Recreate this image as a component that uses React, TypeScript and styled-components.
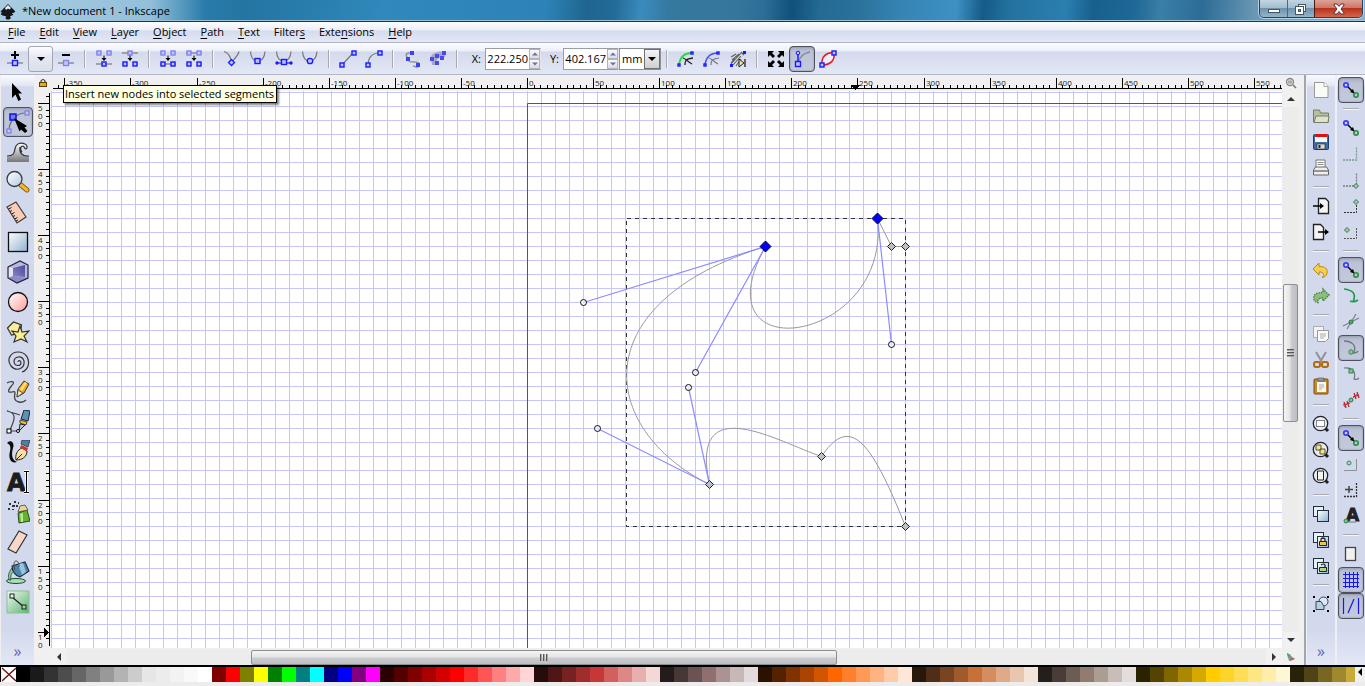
import React, { useLayoutEffect, useRef, useState } from 'react';
import styled, { createGlobalStyle, css } from 'styled-components';

const GlobalStyle = createGlobalStyle`
  *, *::before, *::after { box-sizing: border-box; }
  body { margin: 0; background: #f0f0f0; }
  body, button, input, select {
    font-family: "Open Sans", "Noto Sans", sans-serif;
    font-size: 11px;
    color: #000;
  }
  button { padding: 0; border: 0; background: none; }
  svg { display: block; flex: none; }
`;

/* ---------- window frame ---------- */

const Window = styled.div`
  min-height: 100vh;
  display: flex;
  flex-direction: column;
  overflow: hidden;
`;

const TitleBar = styled.header`
  height: 22px;
  display: flex;
  align-items: center;
  justify-content: space-between;
  border-bottom: 1px solid #17364c;
  box-shadow: inset 0 -1px 0 #9cc3dc;
  background:
    linear-gradient(90deg, rgba(205, 226, 238, 0.75) 0, rgba(190, 218, 235, 0.7) 11%, rgba(160, 200, 225, 0) 15%),
    linear-gradient(95deg, #3a8fbd 0%, #2b7dac 14%, #2475a2 18%, #2a80b0 24%, #3088bb 28%, #2d83b5 40%,
      #1f6590 43%, #226b98 45%, #3a8bbe 47%, #35799f 49%, #35769c 54%, #2b6d95 56%, #10507a 58%,
      #246a93 60%, #2b739c 63%, #3584b4 66%, #3e90c4 70%, #155b87 72%, #2472a0 74%, #2a7fb0 78%,
      #17608e 80%, #1d6896 83%, #3a7fa5 85%, #2c6c96 88%, #6c98b5 92%, #85b4d2 100%);
`;

const Title = styled.h1`
  display: flex;
  align-items: center;
  gap: 6px;
  margin: 0;
  font-size: 11px;
  font-weight: 400;
  line-height: 20px;
`;

const WindowButtons = styled.div`
  display: flex;
  align-self: flex-start;
  height: 18px;
  margin-right: 2px;
  border: 1px solid #2a4257;
  border-top: 0;
  border-radius: 0 0 5px 5px;
  overflow: hidden;
  box-shadow: 0 0 0 1px rgba(230, 243, 250, 0.6);
`;

const WindowButton = styled.button<{ $close?: boolean }>`
  width: ${p => (p.$close ? 48 : 27)}px;
  display: grid;
  place-items: center;
  border-left: 1px solid ${p => (p.$close ? '#4b1a14' : '#4a6a82')};
  background: ${p =>
    p.$close
      ? 'linear-gradient(#dba497 0%, #cf7767 45%, #b9321b 50%, #d2674a 100%)'
      : 'linear-gradient(#c2d5e2 0%, #a3bdd0 45%, #6f93ae 50%, #93b5cb 100%)'};
  &:first-child { border-left: 0; }
`;

const barFace = css`
  background: linear-gradient(#fcfdff 0, #eceff8 8px, #d3d9ec 9px, #d6dcee 40%, #e3e8f6 100%);
  border-bottom: 1px solid #b3b6c9;
`;

const MenuBar = styled.nav`
  ${barFace}
  height: 21px;
  display: flex;
  align-items: center;
  padding-left: 1px;
`;

const MenuLink = styled.a`
  padding: 0 7px;
  color: #000;
  line-height: 20px;
  text-decoration: none;
  u { text-underline-offset: 2px; }
`;

const ControlsBar = styled.div`
  ${barFace}
  height: 32px;
  display: flex;
  align-items: center;
  padding-left: 2px;
`;

const Divider = styled.span<{ $horizontal?: boolean }>`
  flex: none;
  display: grid;
  place-items: center;
  width: ${p => (p.$horizontal ? 16 : 12)}px;
  height: ${p => (p.$horizontal ? 12 : 18)}px;
  &::before {
    content: "";
    width: ${p => (p.$horizontal ? '16px' : '2px')};
    height: ${p => (p.$horizontal ? '2px' : '18px')};
    background: #a9a9ae;
    border: solid #f7f7fa;
    border-width: ${p => (p.$horizontal ? '0 0 1px 0' : '0 1px 0 0')};
  }
`;

const toggled = css`
  border: 1px solid #4f525e;
  border-radius: 4px;
  background: linear-gradient(#a9afc2, #bcc3d6 5px, #c3cadd);
  box-shadow: inset 0 0 2px #7c8192;
`;

const ToolButton = styled.button<{ $on?: boolean }>`
  flex: none;
  width: 26px;
  height: 26px;
  display: grid;
  place-items: center;
  ${p => p.$on && toggled}
`;

const DropButton = styled(ToolButton)`
  width: 25px;
  border: 1px solid #a3a6b2;
  border-radius: 3px;
  background: linear-gradient(#fdfdff, #e6e9f2 40%, #dadfec);
`;

const FieldLabel = styled.label`
  width: 22px;
  padding-right: 4px;
  text-align: right;
`;

const NumberBox = styled.div`
  width: 56px;
  height: 22px;
  display: flex;
  background: #fff;
  border: 1px solid #9a9ca6;
  border-right-color: #e6e6ec;
  input {
    min-width: 0;
    flex: 1;
    padding: 0 1px 0 0;
    border: 0;
    background: none;
    text-align: right;
    outline: none;
  }
`;

const Spinner = styled.span`
  width: 11px;
  display: grid;
  grid-template-rows: 1fr 1fr;
  button {
    display: grid;
    place-items: center;
    border: 1px solid #b3b3b8;
    background: linear-gradient(#fafafa, #dcdce0);
  }
`;

const UnitBox = styled.div`
  position: relative;
  width: 42px;
  height: 22px;
  select {
    width: 100%;
    height: 100%;
    padding: 0 0 0 2px;
    border: 1px solid #8d8f99;
    border-radius: 0;
    background: #fff;
    appearance: none;
    outline: none;
  }
`;

const UnitArrow = styled.span`
  position: absolute;
  top: 1px;
  right: 1px;
  bottom: 1px;
  width: 16px;
  display: grid;
  place-items: center;
  border: 1px solid #707070;
  background: linear-gradient(#f4f4f4, #cfcfcf);
  pointer-events: none;
`;

/* ---------- work area ---------- */

const Main = styled.main`
  flex: 1;
  display: flex;
  position: relative;
`;

const sideFace = css`
  background: linear-gradient(#fafbff 0, #e4e8f5 10px, #d3d9ed 12px, #d3d9ed 94%, #e3e8f6 100%);
`;

const Toolbox = styled.aside`
  ${sideFace}
  width: 33px;
  margin-left: 1px;
  padding-top: 2px;
  display: flex;
  flex-direction: column;
  align-items: center;
`;

const ToolboxButton = styled.button<{ $on?: boolean }>`
  width: 30px;
  height: 30px;
  display: grid;
  place-items: center;
  ${p => p.$on && toggled}
`;

const Overflow = styled.button`
  margin-top: auto;
  height: 28px;
  font-size: 16px;
  line-height: 20px;
  color: #6464ac;
`;

const Sheet = styled.section`
  flex: 1;
  min-width: 0;
  display: grid;
  grid-template-columns: 17px minmax(0, 1fr) 17px;
  grid-template-rows: 16px minmax(0, 1fr) 17px;
  padding-right: 5px;
  background: #f0f0f0;
`;

const Corner = styled.button`
  display: grid;
  place-items: center;
`;

const Ruler = styled.svg`
  width: 100%;
  height: 100%;
  min-height: 0;
  overflow: hidden;
  text { font-family: "Open Sans", sans-serif; font-size: 8px; fill: #222; }
`;

const CanvasCell = styled.div`
  position: relative;
  min-height: 0;
  background: #fff;
  overflow: hidden;
`;

const Drawing = styled.svg`
  position: absolute;
  inset: 0;
  width: 100%;
  height: 100%;
`;

const ScrollTrack = styled.div<{ $vertical?: boolean }>`
  display: flex;
  flex-direction: ${p => (p.$vertical ? 'column' : 'row')};
  align-items: center;
  background: #ececec;
  ${p => (p.$vertical ? 'width: 17px;' : 'height: 16px; margin-top: 1px;')}
`;

const ScrollArrow = styled.button`
  flex: none;
  width: 16px;
  height: 16px;
  display: grid;
  place-items: center;
  background: #f1f1f1;
`;

const Space = styled.span<{ $grow: number }>`
  flex: ${p => p.$grow} 1 0;
`;

const Thumb = styled.span<{ $vertical?: boolean; $grow: number }>`
  flex: ${p => p.$grow} 1 0;
  display: flex;
  flex-direction: ${p => (p.$vertical ? 'column' : 'row')};
  align-items: center;
  justify-content: center;
  gap: 1px;
  border: 1px solid #8f8f8f;
  border-radius: 2px;
  ${p => (p.$vertical ? 'width: 15px;' : 'height: 15px;')}
  background: linear-gradient(${p => (p.$vertical ? '90deg' : '180deg')}, #f4f4f4, #e4e4e6 48%, #cccdd0 52%, #bdbec1);
  i {
    ${p => (p.$vertical ? 'width: 7px; height: 2px;' : 'width: 2px; height: 7px;')}
    background: #555;
    border: solid #aaa;
    border-width: ${p => (p.$vertical ? '0 0 1px 0' : '0 1px 0 0')};
  }
`;

const RightDock = styled.aside`
  display: flex;
  gap: 2px;
  padding-left: 1px;
  border-left: 2px solid #a3a5ac;
  background: #eef0f8;
`;

const IconColumn = styled.div`
  ${sideFace}
  width: 28px;
  padding-top: 2px;
  display: flex;
  flex-direction: column;
  align-items: center;
`;

const Tooltip = styled.div`
  position: absolute;
  top: 10px;
  left: 63px;
  height: 18px;
  padding: 0 2px 0 1px;
  border: 1px solid #000;
  background: #ffffe1;
  box-shadow: 2px 2px 2px rgba(0, 0, 0, 0.5);
  line-height: 16px;
  white-space: nowrap;
`;

/* ---------- palette ---------- */

const Palette = styled.footer`
  height: 21px;
  display: flex;
  padding-left: 2px;
  border-top: 2px solid #000;
  border-bottom: 4px solid #ececec;
  box-shadow: inset 1px 0 0 #000;
`;

const Swatches = styled.div`
  flex: 1;
  min-width: 0;
  display: flex;
  overflow: hidden;
`;

const Swatch = styled.button<{ $color: string }>`
  flex: none;
  width: 14px;
  height: 15px;
  background: ${p => p.$color};
`;

const PaletteMenu = styled.button`
  width: 10px;
  height: 10px;
  display: grid;
  place-items: center;
`;

/* ---------- icon parts ---------- */

const BLUE = '#1a1aff';
const PALE = '#8383ee';

const Glyph = ({ s = 24, children }: { s?: number; children: React.ReactNode }) => (
  <svg width={s} height={s} viewBox="0 0 24 24" fill="none" aria-hidden="true">
    {children}
  </svg>
);

const Sq = ({ x, y, pale, r = 2 }: { x: number; y: number; pale?: boolean; r?: number }) => (
  <rect x={x - r} y={y - r} width={r * 2} height={r * 2} fill={pale ? '#c4c8f4' : '#b8c4ff'}
    stroke={pale ? PALE : BLUE} strokeWidth="1.4" />
);

const Wire = ({ d, c = '#77787c', w = 1.2 }: { d: string; c?: string; w?: number }) => (
  <path d={d} stroke={c} strokeWidth={w} />
);

const Down = () => (
  <path d="M11.5 8.500h1v2.500h2l-2.500 3-2.500-3h2z" fill="#000" />
);

const Triangle = ({ dir, c = '#000', s = 8 }: { dir: 'up' | 'down' | 'left' | 'right'; c?: string; s?: number }) => {
  const d = { up: 'M0 6h8L4 2z', down: 'M0 2h8L4 6z', left: 'M6 0v8L2 4z', right: 'M2 0v8l4-4z' }[dir];
  return (
    <svg width={s} height={s} viewBox="0 0 8 8" aria-hidden="true"><path d={d} fill={c} /></svg>
  );
};

/* ---------- node toolbar ---------- */

const U = 'M4.500 4.500C5 11 7.500 14 11.500 14S18.500 11 19 4.500';

const nodeIcons: Record<string, React.ReactNode> = {
  insert: <><path d="M11 4h2v3h3v2h-3v3h-2V9H8V7h3z" fill="#000" /><Wire d="M4 16h16" /><Sq x={12} y={16} r={2.500} /></>,
  remove: <><path d="M8 7h8v2H8z" fill="#000" /><Wire d="M4 16h16" /><Sq x={12} y={16} pale r={2.500} /></>,
  join: <><Wire d="M4 6h3M17 6h3" /><Sq x={7} y={6} pale /><Sq x={17} y={6} pale /><Down /><Wire d="M4 17h16" /><Sq x={12} y={17} /></>,
  split: <><Wire d="M4 6h16" /><Sq x={12} y={6} pale /><Down /><Wire d="M4 17h3M17 17h3" /><Sq x={7} y={17} /><Sq x={17} y={17} /></>,
  joinSeg: <><Wire d="M4 6h3M17 6h3" /><Sq x={7} y={6} pale /><Sq x={17} y={6} pale /><Down /><Wire d="M4 17h16" /><Sq x={7} y={17} /><Sq x={17} y={17} /></>,
  delSeg: <><Wire d="M4 6h16" /><Sq x={7} y={6} pale /><Sq x={17} y={6} pale /><Down /><Wire d="M4 17h3M17 17h3" /><Sq x={7} y={17} /><Sq x={17} y={17} /></>,
  cusp: <><Wire d="M4 4.500c4 1 6.500 4 7.500 11C13 13 18 9 19 4.500" /><path d="M11.500 12.500l3 3-3 3-3-3z" fill="#b8c4ff" stroke={BLUE} strokeWidth="1.300" /></>,
  smooth: <><Wire d={U} /><Sq x={11.500} y={14} r={2.500} /></>,
  symmetric: <><Wire d={U} /><Wire d="M5 16h14" c={BLUE} /><Sq x={12} y={15} r={2.500} /><circle cx="5" cy="16" r="1.700" fill={BLUE} /><circle cx="19" cy="16" r="1.700" fill={BLUE} /></>,
  auto: <><Wire d={U} /><circle cx="12" cy="14" r="2.700" fill="#b8c4ff" stroke={BLUE} strokeWidth="1.300" /></>,
  line: <><Wire d="M6 18L17 6" /><Sq x={6} y={18} /><Sq x={18} y={6} /></>,
  curve: <><Wire d="M6 18C6 11 10 6 17 6" /><Sq x={6} y={18} /><Sq x={18} y={6} /></>,
  objPath: <><path d="M12 6H9C5 6 6 9 8 12c1 3 2 3 6 3 4 0 5 0 5 3s-3 2-6 1" stroke="#8d90a0" strokeWidth="1.600" />
    <path d="M10 4h4v4h-4zM6 10h4v4H6zM16 16h4v4h-4z" fill="#4040f4" /></>,
  strokePath: <><path d="M5 9c4-5 10-5 14-4v5c-6-1-8 2-10 8H6z" fill="#a5a8c8" />
    <path d="M4 10h4v4H4zM9 7h4v4H9zM9 14h4v4H9zM16 4h4v4h-4zM14 9h4v4h-4z" fill="#4a4aee" /></>,
  clip: <><Wire d="M5 18C6 10 10 6 18 6" c="#22dd33" w={1.800} /><path d="M11 18c0-4 0-6 8-7M9 11c3 1 4 3 9 6" stroke="#222" strokeWidth="1.300" /><Sq x={5} y={18} r={1} /><Sq x={18} y={6} r={1} /></>,
  mask: <><Wire d="M5 18C6 10 10 6 18 6" c="#4b4bff" w={1.600} /><path d="M11 18c0-4 0-6 8-7M9 11c3 1 4 3 9 6" stroke="#777a88" strokeWidth="1.200" /><Sq x={5} y={18} r={1} /><Sq x={18} y={6} r={1} /></>,
  lpe: <><path d="M5 17l10-11M7 18l8-9M5 10l5-3M6 13l7-6M5 16l4-4M10 19l5-7M15 5l3 3" stroke="#5a5e55" strokeWidth="1.100" /><path d="M13 12l5 4-5 4z" fill="#f5df9a" stroke="#222" /><path d="M19 12v8" stroke="#222" strokeWidth="1.300" /><path d="M4 17h3v3H4zM17 4h3v3h-3z" fill={BLUE} /></>,
  transform: <path d="M4 4h6l-2 2 3 3-2 2-3-3-2 2zM20 4v6l-2-2-3 3-2-2 3-3-2-2zM4 20v-6l2 2 3-3 2 2-3 3 2 2zM20 20h-6l2-2-3-3 2-2 3 3 2-2z" fill="#000" />,
  handles: <><Wire d="M8 17C9 10 14 6 20 5" c="#888c98" w={1.500} /><Wire d="M8 6v10" c={BLUE} w={1.500} /><circle cx="8" cy="6" r="1.800" fill="#b8c4ff" stroke={BLUE} /><Sq x={8} y={17} r={2.500} /></>,
  outline: <><path d="M6 18C5 10 10 5 18 6C19 13 15 18 6 18" fill="#eef" stroke="#f01818" strokeWidth="1.500" /><Sq x={6} y={18} /><Sq x={18} y={6} /></>,
};

const NodeTool = ({ id, label, on }: { id: string; label: string; on?: boolean }) => (
  <ToolButton aria-label={label} aria-pressed={on} $on={on}><Glyph>{nodeIcons[id]}</Glyph></ToolButton>
);

const Coordinate = ({ name, value }: { name: string; value: string }) => (
  <>
    <FieldLabel htmlFor={`coord-${name}`}>{name}:</FieldLabel>
    <NumberBox>
      <input id={`coord-${name}`} defaultValue={value} />
      <Spinner>
        <button aria-label={`Increase ${name}`}><Triangle dir="up" c="#5a72b8" s={6} /></button>
        <button aria-label={`Decrease ${name}`}><Triangle dir="down" c="#5a72b8" s={6} /></button>
      </Spinner>
    </NumberBox>
  </>
);

/* ---------- toolbox ---------- */

const tools: { label: string; icon: React.ReactNode; on?: boolean }[] = [
  { label: 'Select', icon: <path d="M6 3v15l3.500-3.500 2.800 6.500 2.800-1.400-2.800-6.100H16z" fill="#000" /> },
  { label: 'Edit paths by nodes', on: true, icon: <>
    <Wire d="M3 21C3 11 10 3 20 3" c="#6b6e7c" />
    <Sq x={21} y={3} pale /><Sq x={3} y={21} pale />
    <rect x="4" y="4" width="6" height="6" fill="#6c7cff" stroke="#1010e8" strokeWidth="1.500" />
    <path d="M8 8l13 8-2.500 1.500L21.500 21l-2.500 2-4-3.500-1.500 2z" fill="#000" /></> },
  { label: 'Tweak', icon: <>
    <path d="M1 22V17c7 0 7-3 8-8 1-5 5-7 9-5 3 2 3 4 2 5-1 1-2 0-2-1-2-2-5 0-4 3 1 4 3 6 9 6v5z" fill="url(#waveFill)" />
    <path d="M1 16c7 0 7-3 8-7 1-6 6-7 10-5 2 1 3 4 1 5-2 0-1-2-3-3-3 0-3 4-1 6M14 7c-1 5 2 10 9 9" stroke="#333" strokeWidth="1.200" /></> },
  { label: 'Zoom', icon: <>
    <path d="M15 15l6 5" stroke="#8a6412" strokeWidth="5" strokeLinecap="round" /><path d="M15 15l6 5" stroke="#f5b731" strokeWidth="3" strokeLinecap="round" />
    <circle cx="8.500" cy="9" r="7.500" fill="url(#lens)" stroke="#3a3d40" strokeWidth="1.300" /></> },
  { label: 'Measure', icon: <>
    <path d="M1 7l9-5 10 15-9 6z" fill="#f7cdb9" stroke="#4a3a34" strokeWidth="1.200" />
    <path d="M2.500 9l3-1.500M4 11.500l2-1M5.500 14l3-1.500M7 16.500l2-1M8.500 19l3-1.500M10 21l2-1" stroke="#222" /></> },
  { label: 'Rectangle', icon: <rect x="2.500" y="2.500" width="19" height="19" fill="url(#rectFill)" stroke="#111" strokeWidth="1.300" /> },
  { label: '3D box', icon: <>
    <path d="M2 7l12-6 8 4v13l-11 5-9-5z" fill="#b9b9e6" />
    <path d="M2 7l5 1v8l-5 2z" fill="#e4e4f6" /><path d="M2 18l5-2 15 2-11 5z" fill="#8a8ac8" /><path d="M7 8l12-3v12l-12-1z" fill="url(#boxFill)" />
    <path d="M2 7l12-6 8 4v13l-11 5-9-5z" stroke="#24242e" strokeWidth="1.200" /></> },
  { label: 'Ellipse', icon: <circle cx="12" cy="12" r="9.500" fill="url(#pinkFill)" stroke="#111" strokeWidth="1.300" /> },
  { label: 'Star', icon: <>
    <path d="M1.500 8l6-6 8 3-1 8-9 2z" fill="#f9eda0" stroke="#333" strokeWidth="1.200" />
    <path d="M14 6l2 6 7-1-5 5 3 6-6-3-7 3 2-6-4-5 6 1z" fill="#fbee90" stroke="#333" strokeWidth="1.200" /></> },
  { label: 'Spiral', icon: <path d="M12 12c0-2 3-2 3 1 0 3-6 4-7-1 0-6 8-7 10-1 1 8-8 11-13 5-5-7 0-14 7-14 8 0 12 7 10 14-1 3-3 5-6 6" stroke="#333" strokeWidth="1.200" /> },
  { label: 'Pencil', icon: <>
    <path d="M1 3c3-2 8-2 6 1-2 3-6 6-4 8 3 1 6-2 6 1-1 4-1 8 4 9 4 1 6-1 7-2" stroke="#444" strokeWidth="1.300" />
    <path d="M11 17l1-8 6-8 5 3-5 9z" fill="#f7a81c" stroke="#333" /><path d="M14 9l5-7 2 1-5 8z" fill="#ffe27a" /><path d="M11 17l1-7 5 3z" fill="#f6e4c0" stroke="#333" strokeWidth="0.700" /></> },
  { label: 'Bezier', icon: <>
    <path d="M1 1c11 2 7 10 3 19M1 1l13 4M4 21h9" stroke="#444" strokeWidth="1.200" />
    <path d="M15 9l3-9 6 1-2 10z" fill="#5a92b5" stroke="#223" /><path d="M14 10l7 2-1 3-6-2z" fill="#f2c230" stroke="#222" strokeWidth="0.800" /><path d="M14 14l5 1-6 6z" fill="#bcd" stroke="#222" />
    <rect x="1" y="19" width="4" height="4" fill="#fff" stroke="#000" /><circle cx="12" cy="21" r="1.500" fill="#fff" stroke="#000" /></> },
  { label: 'Calligraphy', icon: <>
    <path d="M1 3c4-4 8 0 6 5-2 7-1 12 4 14-6 2-9-3-7-11 1-5 0-6-3-8z" fill="#0c0c0c" />
    <path d="M10 20c-1-5 1-10 6-12l5 3c0 6-5 9-11 9z" fill="#f7e3a4" stroke="#222" /><path d="M10 20l6-6" stroke="#222" /><path d="M15 5l7 3-1 3-7-3z" fill="#c33" /><path d="M16 0h8l-2 7-7-3z" fill="#4f7f9b" stroke="#223" strokeWidth="0.700" /></> },
  { label: 'Text', icon: <>
    <text x="1" y="21" fontFamily="DejaVu Sans" fontWeight="700" fontSize="24" fill="#1c1c1c" stroke="#1c1c1c" strokeWidth="0.800">A</text>
    <path d="M20.500 2v20M18 1.500h5M18 22.500h5" stroke="#fff" strokeWidth="3" /><path d="M20.500 2v20M18 1.500h5M18 22.500h5" stroke="#000" strokeWidth="1.100" /></> },
  { label: 'Spray', icon: <>
    <path d="M12 13l9-3 3 11-11 2z" fill="#63b330" stroke="#2a4a18" /><path d="M14 14l3-1v9h-2z" fill="#b9e98d" /><path d="M12 12l2-6 5-1 3 5z" fill="#e9d58d" stroke="#444" strokeWidth="0.800" />
    <path d="M3 3h2v2H3zM8 1h2v2H8zM6 5h3v2H6zM2 8h2v2H2zM10 5h2v2h-2zM6 9h2v1H6zM12 2h1v2h-1z" fill="#333" /></> },
  { label: 'Eraser', icon: <path d="M2 19L13 1l8 4-11 18z" fill="#f8d8ca" stroke="#333" strokeWidth="1.200" /> },
  { label: 'Paint bucket', icon: <>
    <ellipse cx="10" cy="21" rx="9.500" ry="2.500" fill="#a9dcb9" stroke="#1a4a2c" /><path d="M5 20c-1-5 1-7 3-9l-2-3c-4 5-4 9-3 12z" fill="#8bc9a0" stroke="#1a4a2c" strokeWidth="0.800" />
    <path d="M6 6l13-4 4 9-9 6c-4-1-8-5-8-11z" fill="#4b86b0" stroke="#1c2c38" strokeWidth="1.100" /><path d="M12 4l5-1 3 9-4 3z" fill="#9cc3da" /><path d="M9 10c-2-5-1-9 1-9s3 2 3 6" stroke="#444" /></> },
  { label: 'Gradient', icon: <>
    <rect x="1" y="1" width="22" height="22" fill="url(#greenFill)" stroke="#8fbe99" />
    <path d="M6 7l12 10" stroke="#222" strokeWidth="1.300" /><rect x="4" y="4" width="4" height="4" fill="#e4f3e7" stroke="#222" /><rect x="16" y="15" width="4" height="4" fill="#9acfa6" stroke="#222" /></> },
];

/* ---------- right dock ---------- */

type DockItem = { label: string; icon: React.ReactNode; on?: boolean } | null;

const Magnifier = ({ children }: { children: React.ReactNode }) => (
  <><path d="M16 16l3 3" stroke="#222" strokeWidth="3" /><circle cx="11.500" cy="11.500" r="7.200" fill="#e6edf4" stroke="#222" strokeWidth="1.300" />{children}</>
);

const Copies = ({ children }: { children?: React.ReactNode }) => (
  <><rect x="4.500" y="4.500" width="10" height="10" fill="#e6effa" stroke="#222e3a" /><rect x="8.500" y="8.500" width="11" height="11" fill="url(#rectFill)" stroke="#222e3a" />{children}</>
);

const commands: DockItem[] = [
  { label: 'New', icon: <><path d="M5.500 4.500H15l4 4v11H5.500z" fill="#fafaf7" stroke="#9a9a94" /><path d="M15 4.500v4h4" fill="#fff" stroke="#aaa" /></> },
  { label: 'Open', icon: <><path d="M4.500 18V6h6l1 3h8v9z" fill="#b9bf9e" stroke="#777d62" /><path d="M5 18.500L7 12h13l-1 6.500z" fill="#dfe3cd" stroke="#777d62" /></> },
  { label: 'Save', icon: <><rect x="4.500" y="4.500" width="15" height="15" rx="1" fill="#3f6da6" stroke="#203f6a" /><path d="M6 5h12v7H6z" fill="#f8f8f8" /><path d="M6 4h12v3H6z" fill="#d11" /><path d="M8 14h8v5H8z" fill="#d5dae0" stroke="#222" strokeWidth="0.600" /><path d="M9.500 15h2v3h-2z" fill="#223" /></> },
  { label: 'Print', icon: <><path d="M7 11V4h9v7" fill="#fff" stroke="#777" /><path d="M8.500 6.500h6M8.500 8.500h6" stroke="#888" /><path d="M4.500 19v-5l2-3h11l2 3v5z" fill="#eeeeec" stroke="#666" /><path d="M5 15h14" stroke="#777" strokeWidth="1.500" /></> },
  null,
  { label: 'Import', icon: <><path d="M9.500 4.500h7l3 3v12h-10z" fill="#f4f4f2" stroke="#222" strokeWidth="1.300" /><path d="M4 12h8" stroke="#000" strokeWidth="1.500" /><path d="M11 9l4 3-4 3z" fill="#000" /></> },
  { label: 'Export', icon: <><path d="M4.500 4.500h7l3 3v12h-10z" fill="#f4f4f2" stroke="#222" strokeWidth="1.300" /><path d="M9 12h8" stroke="#000" strokeWidth="1.500" /><path d="M16 9l4 3-4 3z" fill="#000" /></> },
  null,
  { label: 'Undo', icon: <path d="M4 11l6-6v3.500c6 0 9 2 8 7-1 3-3 4-5 4 3-2 2-6-3-5.500V17z" fill="#f7cf4a" stroke="#b58a18" /> },
  { label: 'Redo', icon: <path d="M20 11l-6-6v3.500c-7 0-10 2-9 7 1 2 2 3 4 3-1-3 1-4.500 5-4.500V17z" fill="#8cbf7a" stroke="#4c8440" strokeDasharray="1.500 1" strokeWidth="1.500" /> },
  null,
  { label: 'Copy', icon: <><path d="M4.500 4.500h10v11h-10z" fill="#f4f4f4" stroke="#aaa" /><path d="M8.500 8.500h11v8l-3 3h-8z" fill="#fafafa" stroke="#999" /><path d="M11 12h6M11 14h6M11 16h4" stroke="#aaa" /></> },
  { label: 'Cut', icon: <><path d="M7 4l6 10M17 4l-6 10" stroke="#8e9196" strokeWidth="2" /><rect x="5" y="14" width="6" height="5" rx="2" stroke="#b06a12" strokeWidth="2" /><rect x="13" y="14" width="6" height="5" rx="2" stroke="#b06a12" strokeWidth="2" /></> },
  { label: 'Paste', icon: <><rect x="5" y="5" width="14" height="15" rx="1" fill="#c58a2c" stroke="#7a4d0c" /><path d="M8 8h9v10H8z" fill="#f6f6f3" /><path d="M9 4h6v3H9z" fill="#999" stroke="#555" strokeWidth="0.600" /><path d="M10 11h5M10 13h5M10 15h3" stroke="#aaa" /></> },
  null,
  { label: 'Zoom selection', icon: <Magnifier><rect x="7.500" y="8.500" width="8" height="6" fill="#fff" stroke="#111" strokeDasharray="1 1" /></Magnifier> },
  { label: 'Zoom drawing', icon: <Magnifier><path d="M7 7h5v5H7zM11 11h5v5h-5z" fill="#f8e189" stroke="#553" /></Magnifier> },
  { label: 'Zoom page', icon: <Magnifier><path d="M8.500 7h6v9h-6z" fill="#f4f4f0" stroke="#222" /></Magnifier> },
  null,
  { label: 'Duplicate', icon: <Copies /> },
  { label: 'Clone', icon: <Copies><path d="M12 13v-2q2-2 4 0v2" stroke="#222" strokeWidth="1.200" /><path d="M10.500 13.500h7v4h-7z" fill="#f6c544" stroke="#222" /></Copies> },
  { label: 'Unlink clone', icon: <Copies><path d="M12 11q3-2 4 0v2" stroke="#222" strokeWidth="1.200" /><path d="M10.500 13.500h7v4h-7z" fill="#a7d67c" stroke="#222" /></Copies> },
  null,
  { label: 'Group', icon: <><circle cx="14.500" cy="9.500" r="4.500" fill="#dce8f4" stroke="#345" /><path d="M7 9.500h5l3 5v3H7z" fill="#b9cfe4" stroke="#345" /><path d="M4 4h2v2H4zM18 4h2v2h-2zM4 18h2v2H4zM18 18h2v2h-2z" fill="#000" /></> },
];

const snapIcon = <><circle cx="7" cy="7" r="2.200" fill="#c9ccff" stroke="#3d3df2" strokeWidth="1.700" /><circle cx="17" cy="17" r="2.200" fill="#a9cfb4" stroke="#2f8a48" strokeWidth="1.600" /><path d="M9 9l4 4" stroke="#000" strokeWidth="1.400" /><path d="M15.500 15.500l-4.500-1.500 3-3z" fill="#000" /></>;
const dot = (x: number, y: number) => <path d={`M${x} ${y - 2.500}l2.500 2.500-2.500 2.500-2.500-2.500z`} fill="#a4cbb0" stroke="#36764a" />;
const corner = (c: string) => <path d="M4 18h13.500V5" stroke={c} strokeWidth="1.300" strokeDasharray="2 1" />;

const snaps: DockItem[] = [
  { label: 'Enable snapping', icon: snapIcon, on: true },
  null,
  { label: 'Snap bounding boxes', icon: snapIcon },
  { label: 'Snap to edges', icon: corner('#6fa381') },
  { label: 'Snap to corners', icon: <>{corner('#777c80')}{dot(17, 18)}</> },
  { label: 'Snap edge midpoints', icon: <><path d="M5 18.500h12.500V7" stroke="#333" strokeDasharray="2 1" />{dot(17, 8)}</> },
  { label: 'Snap box centers', icon: <><path d="M5 18.500h12.500V7" stroke="#555" strokeDasharray="2 1" />{dot(8, 10)}</> },
  null,
  { label: 'Snap nodes', icon: snapIcon, on: true },
  { label: 'Snap to paths', icon: <path d="M5 5c8 1 13 4 9 13M19 16c-3 2-6 2-8 1" stroke="#1e9a49" strokeWidth="1.700" /> },
  { label: 'Snap intersections', icon: <><path d="M4 16L20 8M8 19l9-15" stroke="#7f8288" strokeWidth="1.300" /><circle cx="12" cy="12" r="2" fill="#4fa868" stroke="#2f7a44" /></> },
  { label: 'Snap cusp nodes', icon: <><path d="M5 5c7 0 13 4 10 11M19 15c-1 2-3 2-5 2" stroke="#70747e" strokeWidth="1.300" /><circle cx="12" cy="16" r="2.200" fill="#8bc79c" stroke="#2f8a48" /></>, on: true },
  { label: 'Snap smooth nodes', icon: <><path d="M5 6c6-1 13 2 10 11 2 1 4 0 5-1" stroke="#70747e" strokeWidth="1.200" /><rect x="10" y="7" width="4" height="4" fill="#7fc294" stroke="#2f8a48" /></> },
  { label: 'Snap midpoints', icon: <><path d="M5 19L19 5" stroke="#777" /><path d="M5 14l2 6M8 13l2 6M15 5l2 6M18 4l2 6M4 17l7-2M14 9l6-2" stroke="#c9202a" strokeWidth="1.300" /><circle cx="12" cy="12" r="2" fill="#7fc294" stroke="#2f7a44" /></> },
  null,
  { label: 'Snap others', icon: snapIcon, on: true },
  { label: 'Snap object centers', icon: <><path d="M5 18.500h12.500V7" stroke="#8d9198" /><circle cx="10" cy="11" r="2" fill="#b5dcc0" stroke="#2f8a48" /></> },
  { label: 'Snap rotation centers', icon: <><path d="M5 18.500h12.500V5" stroke="#333" strokeDasharray="2 1" strokeWidth="1.300" /><path d="M10 8v7M6 11.500h8" stroke="#444" strokeWidth="1.500" /></> },
  { label: 'Snap text baselines', icon: <><text x="7" y="17" fontFamily="DejaVu Sans" fontWeight="700" fontSize="17" fill="#222" stroke="#222" strokeWidth="0.800">A</text><path d="M5 18h12" stroke="#777" /><circle cx="7" cy="17" r="2" fill="#7fc294" stroke="#2f8a48" /></> },
  null,
  { label: 'Snap page border', icon: <rect x="6.500" y="5.500" width="10" height="13" fill="#f2f2ee" stroke="#444" strokeWidth="1.300" /> },
  { label: 'Snap grids', icon: <path d="M4 6.500h16M4 10.500h16M4 14.500h16M4 18.500h16M6.500 4v16M10.500 4v16M14.500 4v16M18.500 4v16" stroke="#1414ff" />, on: true },
  { label: 'Snap guides', icon: <path d="M4.500 4v16M19.500 4v16M9 19l6-14" stroke="#1414ff" strokeWidth="1.200" />, on: true },
];

const DockColumn = ({ items, more }: { items: DockItem[]; more?: boolean }) => (
  <IconColumn>
    {items.map((item, i) =>
      item ? (
        <ToolButton key={i} aria-label={item.label} $on={item.on}><Glyph>{item.icon}</Glyph></ToolButton>
      ) : (
        <Divider key={i} $horizontal />
      ),
    )}
    {more && <Overflow aria-label="More commands">»</Overflow>}
  </IconColumn>
);

/* ---------- rulers and drawing ---------- */

const PX_PER_MM = 1.3218;
const ORIGIN_X = 476;
const RULER_TOP_MM = 500;

const HorizontalRuler = () => {
  const ref = useRef<SVGSVGElement>(null);
  const [width, setWidth] = useState(1230);
  useLayoutEffect(() => {
    const measure = () => ref.current && setWidth(ref.current.getBoundingClientRect().width);
    measure();
    window.addEventListener('resize', measure);
    return () => window.removeEventListener('resize', measure);
  }, []);
  const marks: number[] = [];
  for (let mm = -355; ORIGIN_X + mm * PX_PER_MM < width; mm += 5) marks.push(mm);
  return (
    <Ruler ref={ref} aria-hidden="true" shapeRendering="crispEdges">
      <path d="M2 13.500H3000" stroke="#000" strokeWidth="1" />
      {marks.map(mm => {
        const x = Math.round(ORIGIN_X + mm * PX_PER_MM);
        const major = mm % 50 === 0;
        return (
          <g key={mm}>
            <path d={`M${x + 0.500} ${major ? 3 : 10}V14`} stroke="#000" />
            {major && <text x={x + 2} y={11}>{mm}</text>}
          </g>
        );
      })}
      <path d="M800 10h9l-4.500 5z" fill="#000" />
    </Ruler>
  );
};

const VerticalRuler = () => {
  const marks = [];
  for (let mm = 505; mm >= 95; mm -= 5) marks.push(mm);
  return (
    <Ruler aria-hidden="true" shapeRendering="crispEdges">
      <path d="M15.500 2V555" stroke="#000" />
      {marks.map(mm => {
        const y = Math.round(12 + (RULER_TOP_MM - mm) * PX_PER_MM);
        const major = mm % 50 === 0;
        return (
          <g key={mm}>
            <path d={`M${major ? 4 : 12} ${y + 0.500}H15`} stroke="#000" />
            {major && String(mm).split('').slice(0, mm === 100 ? 2 : 3).map((d, i) => (
              <text key={i} x={4} y={y + 8 + i * 8}>{d}</text>
            ))}
          </g>
        );
      })}
      <path d="M10 537v9l5-4.500z" fill="#000" />
    </Ruler>
  );
};

const Handle = ({ x, y }: { x: number; y: number }) => (
  <circle cx={x} cy={y} r="3" fill="#fff" fillOpacity="0.600" stroke="#111" strokeWidth="1" />
);

const Diamond = ({ x, y, on }: { x: number; y: number; on?: boolean }) => {
  const r = on ? 5.500 : 4;
  return (
    <path d={`M${x} ${y - r}l${r} ${r}-${r} ${r}-${r}-${r}z`} fill={on ? '#0000ff' : '#bfbfbf'}
      stroke={on ? '#00004a' : '#222'} strokeWidth="1" />
  );
};

const Canvas = () => (
  <Drawing role="img" aria-label="Drawing canvas">
    <defs>
      <pattern id="grid" x="0" y="1" width="14" height="14" patternUnits="userSpaceOnUse">
        <path d="M0.500 0V14M0 0.500H14" stroke="#c6c6fb" shapeRendering="crispEdges" />
      </pattern>
    </defs>
    <rect width="100%" height="100%" fill="url(#grid)" />
    <path d="M476.500 3000V12.500H3000" fill="none" stroke="#55556a" />
    {/* artwork is placed in window units, shifted by the ruler and toolbars */}
    <g transform="translate(-50.500 -90.500)" fill="none">
      <rect x="626" y="218" width="279" height="308" stroke="#333" strokeDasharray="4 4" shapeRendering="crispEdges" />
      <g stroke="#999" strokeWidth="1">
        <path d="M765 246C583 302 597 428 709 484C688 387 779 442 821 456C849 414 870 438 905 526" />
        <path d="M765 246C695 372 891 344 877 218L891 246H905" />
      </g>
      <path d="M583 302L765 246L695 372M877 218L891 344M688 387L709 484L597 428" stroke="#8c8cff" strokeWidth="1.200" />
      <Handle x={583} y={302} /><Handle x={695} y={372} /><Handle x={891} y={344} />
      <Handle x={688} y={387} /><Handle x={597} y={428} />
      <Diamond x={891} y={246} /><Diamond x={905} y={246} /><Diamond x={709} y={484} />
      <Diamond x={821} y={456} /><Diamond x={905} y={526} />
      <Diamond x={765} y={246} on /><Diamond x={877} y={218} on />
    </g>
  </Drawing>
);

const palette = `000000 1a1a1a 333333 4d4d4d 666666 808080 999999 b3b3b3 cccccc e6e6e6 ececec f2f2f2 f9f9f9 ffffff
800000 ff0000 808000 ffff00 008000 00ff00 008080 00ffff 000080 0000ff 800080 ff00ff
2b0000 550000 800000 aa0000 d40000 ff0000 ff2a2a ff5555 ff8080 ffaaaa ffd5d5
280b0b 501616 782121 a02c2c c83737 d35f5f de8787 e9afaf f4d7d7
241c1c 483737 6c5353 916f6f ac9393 c8b7b7 e3dbdb
2b1100 552200 803300 aa4400 d45500 ff6600 ff7f2a ff9955 ffb380 ffccaa ffe6d5
28170b 502d16 784421 a05a2c c87137 d38d5f deaa87 e9c6af f4e3d7
241f1c 483e37 6c5d53 917c6f ac9d93 c8beb7 e3dedb
2b2200 554400 806600 aa8800 d4aa00 ffcc00 ffd42a ffdd55 ffe680 ffeeaa fff6d5
28220b 504416 786721 a0892c c8ab37`.split(/\s+/);

const menus: [string, string, string][] = [
  ['', 'F', 'ile'], ['', 'E', 'dit'], ['', 'V', 'iew'], ['', 'L', 'ayer'], ['', 'O', 'bject'],
  ['', 'P', 'ath'], ['', 'T', 'ext'], ['Filter', 's', ''], ['Exte', 'n', 'sions'], ['', 'H', 'elp'],
];

const HiddenSvg = styled.svg`
  position: absolute;
`;

const SharedFills = () => (
  <HiddenSvg width="0" height="0" aria-hidden="true">
    <defs>
      <linearGradient id="rectFill" x1="0" y1="0" x2="1" y2="1"><stop stopColor="#fff" /><stop offset="1" stopColor="#8fb2d2" /></linearGradient>
      <linearGradient id="boxFill" x1="0" y1="1" x2="1" y2="0"><stop stopColor="#8484c4" /><stop offset="1" stopColor="#4a4a98" /></linearGradient>
      <linearGradient id="pinkFill" x1="0" y1="0" x2="1" y2="1"><stop stopColor="#fff" /><stop offset="1" stopColor="#ff9c9c" /></linearGradient>
      <linearGradient id="greenFill" x1="0" y1="0" x2="1" y2="1"><stop stopColor="#f0faf2" /><stop offset="1" stopColor="#5ab36e" /></linearGradient>
      <linearGradient id="waveFill" x1="0" y1="0" x2="0" y2="1"><stop stopColor="#fff" /><stop offset="1" stopColor="#777" /></linearGradient>
      <linearGradient id="lens" x1="0" y1="0" x2="1" y2="1"><stop stopColor="#fff" /><stop offset="1" stopColor="#b4cbe2" /></linearGradient>
    </defs>
  </HiddenSvg>
);

export default function App() {
  return (
    <Window>
      <GlobalStyle />
      <SharedFills />
      <TitleBar>
        <Title>
          <svg width="16" height="18" viewBox="0 0 16 18" aria-hidden="true">
            <path d="M8 2l7 7c1 1.500-3 2-3 2.500s2 .5 1 1.500c-1 .8-3 .5-3 1.500s2 1 0 2.500c-1 .8-3 .8-4 0-1.500-1.500 1-1.500 0-2.500s-4-.5-5-2 2-1 1-1.700S0 10 1 9z" fill="#15181b" />
            <path d="M8 3l3 3-1.500 1.500L8 6.500 6 8 5 6z" fill="#e8eef2" />
          </svg>
          *New document 1 - Inkscape
        </Title>
        <WindowButtons>
          <WindowButton aria-label="Minimize"><svg width="12" height="12" viewBox="0 0 12 12"><rect x="0.500" y="6.500" width="11" height="3" fill="#fff" stroke="#445566" /></svg></WindowButton>
          <WindowButton aria-label="Restore"><svg width="12" height="12" viewBox="0 0 12 12" fill="none"><rect x="3.500" y="1.500" width="7" height="7" fill="#fff" stroke="#445566" /><rect x="0.500" y="3.500" width="8" height="8" fill="#fff" stroke="#445566" /><rect x="3.500" y="6.500" width="2" height="2" fill="#7b9ab2" stroke="#445566" /></svg></WindowButton>
          <WindowButton aria-label="Close" $close><svg width="12" height="12" viewBox="0 0 12 12"><path d="M1 1h3l2 2.500L8 1h3v1L8 6l3 4v1H8L6 8.500 4 11H1v-1l3-4-3-4z" fill="#fff" stroke="#56343a" /></svg></WindowButton>
        </WindowButtons>
      </TitleBar>

      <MenuBar>
        {menus.map(([before, key, after]) => (
          <MenuLink key={before + key + after} href="#">{before}<u>{key}</u>{after}</MenuLink>
        ))}
      </MenuBar>

      <ControlsBar>
        <NodeTool id="insert" label="Insert node" />
        <DropButton aria-label="Insert options"><Triangle dir="down" /></DropButton>
        <NodeTool id="remove" label="Delete node" />
        <Divider />
        <NodeTool id="join" label="Join nodes" />
        <NodeTool id="split" label="Break path" />
        <Divider />
        <NodeTool id="joinSeg" label="Join with segment" />
        <NodeTool id="delSeg" label="Delete segment" />
        <Divider />
        <NodeTool id="cusp" label="Corner" />
        <NodeTool id="smooth" label="Smooth" />
        <NodeTool id="symmetric" label="Symmetric" />
        <NodeTool id="auto" label="Auto-smooth" />
        <Divider />
        <NodeTool id="line" label="Make lines" />
        <NodeTool id="curve" label="Make curves" />
        <Divider />
        <NodeTool id="objPath" label="Object to path" />
        <NodeTool id="strokePath" label="Stroke to path" />
        <Divider />
        <Coordinate name="X" value="222.250" />
        <Coordinate name="Y" value="402.167" />
        <UnitBox>
          <select aria-label="Unit" defaultValue="mm"><option>mm</option><option>px</option></select>
          <UnitArrow><Triangle dir="down" /></UnitArrow>
        </UnitBox>
        <Divider />
        <NodeTool id="clip" label="Edit clip" />
        <NodeTool id="mask" label="Edit mask" />
        <NodeTool id="lpe" label="Next effect parameter" />
        <Divider />
        <NodeTool id="transform" label="Transform handles" />
        <NodeTool id="handles" label="Show handles" on />
        <NodeTool id="outline" label="Show outline" />
      </ControlsBar>

      <Main>
        <Toolbox>
          {tools.map(t => (
            <ToolboxButton key={t.label} aria-label={t.label} $on={t.on}><Glyph>{t.icon}</Glyph></ToolboxButton>
          ))}
          <Overflow aria-label="More tools">»</Overflow>
        </Toolbox>

        <Sheet>
          <Corner aria-label="Lock guides">
            <svg width="8" height="10" viewBox="0 0 8 10"><path d="M2 5V3q2-3 4 0v2" fill="none" stroke="#333" strokeWidth="1.200" /><rect x="0.500" y="4.500" width="7" height="4" fill="#e9a928" stroke="#5f3e06" /></svg>
          </Corner>
          <HorizontalRuler />
          <Corner aria-label="Zoom on resize">
            <svg width="12" height="12" viewBox="0 0 12 12" fill="none"><circle cx="5" cy="5" r="3.500" fill="#ddd" stroke="#888" strokeWidth="1.300" /><path d="M8 8l3 3" stroke="#777" strokeWidth="1.600" /><path d="M4 3.500v3M6 3.500v3" stroke="#777" /></svg>
          </Corner>
          <VerticalRuler />
          <CanvasCell><Canvas /></CanvasCell>
          <ScrollTrack $vertical>
            <ScrollArrow aria-label="Scroll up"><Triangle dir="up" c="#333" /></ScrollArrow>
            <Space $grow={178} />
            <Thumb $vertical $grow={136}><i /><i /><i /></Thumb>
            <Space $grow={211} />
            <ScrollArrow aria-label="Scroll down"><Triangle dir="down" c="#333" /></ScrollArrow>
          </ScrollTrack>
          <span />
          <ScrollTrack>
            <ScrollArrow aria-label="Scroll left"><Triangle dir="left" c="#333" /></ScrollArrow>
            <Space $grow={184} />
            <Thumb $grow={585}><i /><i /><i /></Thumb>
            <Space $grow={430} />
            <ScrollArrow aria-label="Scroll right"><Triangle dir="right" c="#333" /></ScrollArrow>
          </ScrollTrack>
          <Corner aria-label="Color management">
            <svg width="10" height="10" viewBox="0 0 10 10"><path d="M1 1l8 6-6 2z" fill="#8a8f98" /><path d="M1 1l4 2-3 3z" fill="#3fae5a" /><path d="M5 6l4 1-5 2z" fill="#c55" /></svg>
          </Corner>
        </Sheet>

        <RightDock>
          <DockColumn items={commands} more />
          <DockColumn items={snaps} />
        </RightDock>

        <Tooltip role="tooltip">Insert new nodes into selected segments</Tooltip>
      </Main>

      <Palette>
        <Swatches>
          <Swatch $color="#fff" aria-label="None">
            <svg width="14" height="15" viewBox="0 0 14 15"><path d="M0 1l14 13M14 1L0 14" stroke="#6e1414" strokeWidth="1.300" /></svg>
          </Swatch>
          {palette.map((c, i) => <Swatch key={i} $color={`#${c}`} aria-label={`#${c}`} />)}
        </Swatches>
        <PaletteMenu aria-label="Palette menu"><Triangle dir="left" /></PaletteMenu>
      </Palette>
    </Window>
  );
}
